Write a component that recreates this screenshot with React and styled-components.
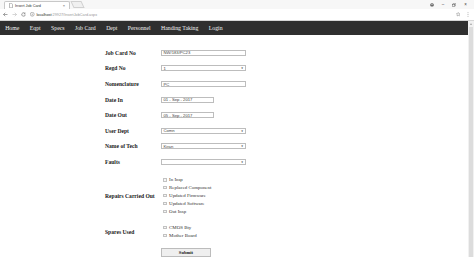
import React from "react";
import styled, { createGlobalStyle } from "styled-components";

const GlobalStyle = createGlobalStyle`
  html, body {
    margin: 0;
    padding: 0;
    width: 474px;
    height: 257px;
    overflow: hidden;
    background: #ffffff;
    font-family: "Liberation Serif", "Times New Roman", serif;
  }
`;

const Window = styled.div`
  display: flex;
  flex-direction: column;
  width: 474px;
  height: 257px;
  background: #fff;
`;

const TabStrip = styled.div`
  display: flex;
  align-items: flex-end;
  height: 9px;
  background: #f7f7f7;
`;

const Tab = styled.div`
  display: flex;
  align-items: center;
  width: 66px;
  height: 8px;
  margin-left: 4px;
  padding: 0 4px;
  box-sizing: border-box;
  background: #ffffff;
  border: 1px solid #c8c8c8;
  border-bottom: none;
  border-radius: 2px 2px 0 0;
  gap: 2px;
`;

const TabTitle = styled.span`
  flex: 1;
  font-family: "Liberation Sans", Arial, sans-serif;
  font-size: 3.8px;
  color: #333;
  white-space: nowrap;
`;

const TabClose = styled.span`
  font-family: "Liberation Sans", Arial, sans-serif;
  font-size: 4px;
  color: #555;
`;

const NewTab = styled.div`
  width: 9px;
  height: 5px;
  margin: 0 0 1px 2px;
  border: 1px solid #d0d0d0;
  background: #f0f0f0;
  transform: skewX(25deg);
`;

const WinControls = styled.div`
  margin-left: auto;
  display: flex;
  align-items: center;
  align-self: center;
  gap: 8px;
  padding-right: 7px;
  font-family: "Liberation Sans", Arial, sans-serif;
  font-size: 4.5px;
  color: #444;
`;

const Toolbar = styled.div`
  display: flex;
  align-items: center;
  height: 12px;
  padding: 0 3px;
  gap: 4px;
  background: #ffffff;
  border-bottom: 1px solid #d6d6d6;
  box-sizing: border-box;
`;

const NavIcon = styled.span`
  display: flex;
  align-items: center;
  color: ${(p) => (p.$dim ? "#bbb" : "#666")};
`;

const Omnibox = styled.div`
  flex: 1;
  display: flex;
  align-items: center;
  gap: 2px;
  height: 8px;
  font-family: "Liberation Sans", Arial, sans-serif;
  font-size: 3.8px;
`;

const Host = styled.span`
  color: #222;
`;

const Path = styled.span`
  color: #999;
  margin-left: -2px;
`;

const OmniRight = styled.div`
  margin-left: auto;
  display: flex;
  align-items: center;
  gap: 7px;
  padding-right: 2px;
  color: #777;
`;

const Viewport = styled.div`
  flex: 1;
  display: flex;
  min-height: 0;
`;

const Page = styled.div`
  flex: 1;
  display: flex;
  flex-direction: column;
`;

const Scrollbar = styled.div`
  width: 6px;
  background: #f1f1f1;
  display: flex;
  flex-direction: column;
  align-items: center;
`;

const ScrollArrow = styled.div`
  width: 0;
  height: 0;
  margin-top: 2px;
  border-left: 1.5px solid transparent;
  border-right: 1.5px solid transparent;
  border-bottom: 2px solid #a3a3a3;
`;

const Thumb = styled.div`
  width: 4px;
  flex: 1;
  margin: 2px 0 0;
  background: #dcdcdc;
`;

const NavBar = styled.nav`
  display: flex;
  align-items: center;
  height: 15.5px;
  background: #2f2f2f;
`;

const NavLink = styled.a`
  color: #f2f2f2;
  font-size: 5.8px;
  padding: 0 5.2px;
  text-decoration: none;
  white-space: nowrap;
`;

const Form = styled.form`
  display: flex;
  flex-direction: column;
  padding-left: 105px;
  margin-top: 9.7px;
`;

const Row = styled.div`
  display: flex;
  align-items: center;
  height: ${(p) => p.$h || 15.6}px;
  margin-top: ${(p) => p.$mt || 0}px;
`;

const Label = styled.label`
  width: 56px;
  font-weight: bold;
  font-size: 5.6px;
  color: #1a1a1a;
  white-space: nowrap;
`;

const Field = styled.div`
  display: flex;
  align-items: center;
  box-sizing: border-box;
  width: ${(p) => p.$w || 85}px;
  height: 6px;
  padding: 0 1.5px;
  border: 1px solid #bdbdbd;
  font-family: "Liberation Sans", Arial, sans-serif;
  font-size: 4.2px;
  color: #444;
  background: #fff;
  white-space: nowrap;
`;

const Caret = styled.span`
  margin-left: auto;
  font-size: 2.8px;
  color: #222;
`;

const Options = styled.div`
  display: flex;
  flex-direction: column;
`;

const Option = styled.div`
  display: flex;
  align-items: center;
  height: 7.9px;
  gap: 2.5px;
  padding-left: 2px;
  font-size: 4.9px;
  color: #333;
  white-space: nowrap;
`;

const Box = styled.span`
  box-sizing: border-box;
  width: 3.6px;
  height: 3.6px;
  border: 1px solid #c2c2c2;
  background: #f6f6f6;
`;

const Submit = styled.button`
  margin-left: 56px;
  margin-top: 8.5px;
  width: 50px;
  height: 9px;
  padding: 0;
  border: 1px solid #bcbcbc;
  background: #efefef;
  font-family: "Liberation Serif", "Times New Roman", serif;
  font-weight: bold;
  font-size: 4.6px;
  color: #222;
`;

const Icon = ({ d, size = 5, stroke = "currentColor" }) => (
  <svg width={size} height={size} viewBox="0 0 10 10" fill="none" stroke={stroke} strokeWidth="1.2">
    <path d={d} />
  </svg>
);

const fields = [
  { label: "Job Card No", value: "NW/183/PC23" },
  { label: "Regd No", value: "1", select: true },
  { label: "Nomenclature", value: "PC" },
  { label: "Date In", value: "01 - Sep - 2017", w: 52.5 },
  { label: "Date Out", value: "05 - Sep - 2017", w: 52.5 },
  { label: "User Dept", value: "Comn", select: true },
  { label: "Name of Tech", value: "Kiran", select: true },
  { label: "Faults", value: "", select: true },
];

const repairs = ["In Insp", "Replaced Component", "Updated Firmware", "Updated Software", "Out Insp"];
const spares = ["CMOS Bty", "Mother Board"];

const navItems = ["Home", "Eqpt", "Specs", "Job Card", "Dept", "Personnel", "Handing Taking", "Login"];

export default function App() {
  return (
    <Window>
      <GlobalStyle />
      <TabStrip>
        <Tab>
          <svg width="4" height="5" viewBox="0 0 8 10">
            <path d="M1 0.5h4l2 2v7h-6z" fill="#fff" stroke="#555" strokeWidth="0.8" />
          </svg>
          <TabTitle>Insert Job Card</TabTitle>
          <TabClose>×</TabClose>
        </Tab>
        <NewTab />
        <WinControls>
          <svg width="4" height="4" viewBox="0 0 10 10">
            <circle cx="5" cy="5" r="4.5" fill="#555" />
            <circle cx="5" cy="4" r="1.6" fill="#fff" />
            <path d="M2.2 8.2c1-1.8 4.6-1.8 5.6 0" fill="#fff" />
          </svg>
          <span>–</span>
          <svg width="4" height="4" viewBox="0 0 10 10" fill="none" stroke="#444" strokeWidth="1">
            <rect x="1" y="3" width="6" height="6" />
            <path d="M3 3V1h6v6H7" />
          </svg>
          <span>×</span>
        </WinControls>
      </TabStrip>
      <Toolbar>
        <NavIcon>
          <Icon d="M9 5H1M4.5 1.5L1 5l3.5 3.5" />
        </NavIcon>
        <NavIcon $dim>
          <Icon d="M1 5h8M5.5 1.5L9 5 5.5 8.5" />
        </NavIcon>
        <NavIcon>
          <Icon d="M8.5 5a3.5 3.5 0 1 1-1.2-2.7M8 1v2.5H5.5" />
        </NavIcon>
        <Omnibox>
          <svg width="4.5" height="4.5" viewBox="0 0 10 10">
            <circle cx="5" cy="5" r="4.3" fill="none" stroke="#666" strokeWidth="1" />
            <path d="M5 4.3v3M5 2.5v0.8" stroke="#666" strokeWidth="1.1" />
          </svg>
          <Host>localhost</Host>
          <Path>:29927/InsertJobCard.aspx</Path>
          <OmniRight>
            <svg width="4.5" height="4.5" viewBox="0 0 10 10">
              <path d="M5 0.8l1.3 2.8 3 .3-2.3 2 .7 3L5 7.4 2.3 8.9l.7-3-2.3-2 3-.3z" fill="none" stroke="#777" strokeWidth="0.9" />
            </svg>
            <svg width="2" height="5" viewBox="0 0 4 10">
              <circle cx="2" cy="1.5" r="0.9" fill="#777" />
              <circle cx="2" cy="5" r="0.9" fill="#777" />
              <circle cx="2" cy="8.5" r="0.9" fill="#777" />
            </svg>
          </OmniRight>
        </Omnibox>
      </Toolbar>
      <Viewport>
        <Page>
          <NavBar>
            {navItems.map((n) => (
              <NavLink key={n} href="#">
                {n}
              </NavLink>
            ))}
          </NavBar>
          <Form onSubmit={(e) => e.preventDefault()}>
            {fields.map((f) => (
              <Row key={f.label}>
                <Label>{f.label}</Label>
                <Field $w={f.w}>
                  {f.value}
                  {f.select && <Caret>▼</Caret>}
                </Field>
              </Row>
            ))}
            <Row $h={39.5} $mt={6}>
              <Label>Repairs Carried Out</Label>
              <Options>
                {repairs.map((r) => (
                  <Option key={r}>
                    <Box />
                    {r}
                  </Option>
                ))}
              </Options>
            </Row>
            <Row $h={15.8} $mt={8.4}>
              <Label>Spares Used</Label>
              <Options>
                {spares.map((s) => (
                  <Option key={s}>
                    <Box />
                    {s}
                  </Option>
                ))}
              </Options>
            </Row>
            <Submit type="submit">Submit</Submit>
          </Form>
        </Page>
        <Scrollbar>
          <ScrollArrow />
          <Thumb />
        </Scrollbar>
      </Viewport>
    </Window>
  );
}
